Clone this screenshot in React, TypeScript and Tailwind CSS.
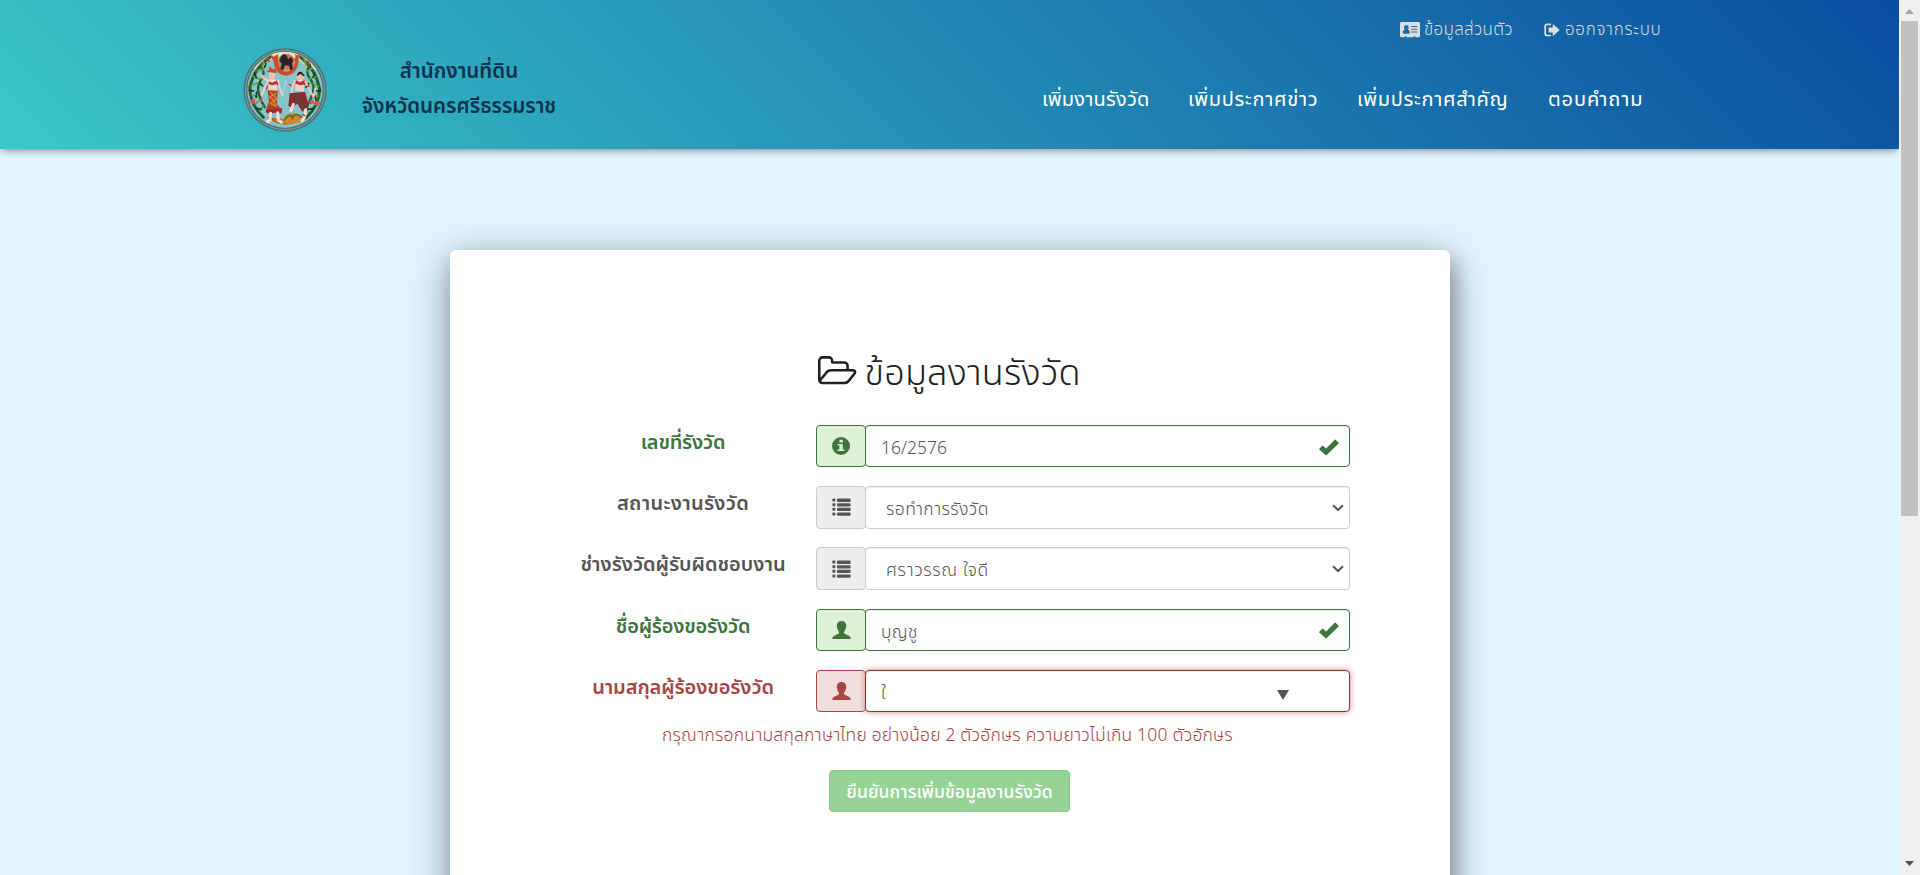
import React from "react";

type Tone = "success" | "neutral" | "error";

const labelTone: Record<Tone, string> = {
  success: "text-[#3c763d]",
  neutral: "text-[#555555]",
  error: "text-[#a94442]",
};

const addonTone: Record<Tone, string> = {
  success: "border-[#3c763d] bg-[#dff0d8] text-[#3c763d]",
  neutral: "border-[#cccccc] bg-[#eeeeee] text-[#555555]",
  error: "border-[#a94442] bg-[#f2dede] text-[#a94442]",
};

const fieldTone: Record<Tone, string> = {
  success: "border-[#3c763d] shadow-[inset_0_1px_1px_rgba(0,0,0,0.075)]",
  neutral: "border-[#cccccc] shadow-[inset_0_1px_1px_rgba(0,0,0,0.075)]",
  error: "border-[#843534] shadow-[inset_0_1px_1px_rgba(0,0,0,0.075),0_0_6px_#ce8483]",
};

function InfoIcon() {
  return (
    <svg className="size-[18px]" viewBox="0 0 18 18" fill="currentColor">
      <path fillRule="evenodd" d="M9 0a9 9 0 1 1 0 18A9 9 0 0 1 9 0ZM7.4 2.7v2.8h3.4V2.7ZM5.6 7v1.3h1.8v4.3H5.6V14h6.8v-1.4h-1.6V7Z" />
    </svg>
  );
}

function ListIcon() {
  return (
    <svg className="h-[18px] w-[19px]" viewBox="0 0 19 18" fill="currentColor">
      {[0.6, 5.2, 9.8, 14.4].map((y) => (
        <g key={y}>
          <rect x="0.4" y={y} width="3" height="3" rx="0.7" />
          <rect x="5" y={y} width="13.6" height="3.3" rx="1" />
        </g>
      ))}
    </svg>
  );
}

function UserIcon() {
  return (
    <svg className="h-[18px] w-[19px]" viewBox="0 0 19 18" fill="currentColor">
      <path d="M9.5 0C6.600 0 4.800 1.900 4.800 4.700c0 2.500 1 4.500 2 5.700.6.900.4 1.900-.5 2.400L1.800 15C.8 15.500.3 16.500.3 18h18.400c0-1.500-.5-2.500-1.500-3l-4.500-2.200c-.9-.5-1.100-1.500-.5-2.400 1-1.200 2-3.200 2-5.700C14.200 1.900 12.400 0 9.500 0Z" />
    </svg>
  );
}

function CheckIcon() {
  return (
    <svg className="mt-[2px] h-[17px] w-5 text-[#3c763d]" viewBox="0 0 20 17" fill="currentColor">
      <path d="M.3 9.800 3.300 6.700q.4-.4.800 0L7 9.500 15.800.700q.4-.4.800 0l3 3q.4.400 0 .8L7.500 16.200q-.4.400-.8 0L.3 10.500q-.4-.4 0-.7Z" />
    </svg>
  );
}

function ChevronIcon() {
  return (
    <svg className="mt-px h-[8px] w-[12px]" viewBox="0 0 12 8" fill="none" stroke="#555" strokeWidth="2">
      <path d="M1 1.200 6 6l5-4.800" />
    </svg>
  );
}

function FolderIcon() {
  return (
    <svg className="h-[31px] w-[38.57px]" viewBox="0 0 1920 1536" fill="currentColor">
      <path d="M1781 803q0-35-53-35h-1088q-40 0-85.500 21.500t-71.500 52.500l-294 363q-18 24-18 40 0 35 53 35h1088q40 0 86-22t71-53l294-363q18-22 18-39zM640 640h768v-160q0-40-28-68t-68-28h-576q-40 0-68-28t-28-68v-64q0-40-28-68t-68-28h-320q-40 0-68 28t-28 68v853l256-315q44-53 116-87.500t140-34.500zM1909 803q0 62-46 120l-295 363q-43 53-116 87.500t-140 34.500h-1088q-92 0-158-66t-66-158v-960q0-92 66-158t158-66h320q92 0 158 66t66 158v32h544q92 0 158 66t66 158v160h192q54 0 99 24.500t67 70.500q15 32 15 68z" />
    </svg>
  );
}

function CardIcon() {
  return (
    <svg className="h-4 w-5" viewBox="0 0 20 16" fill="currentColor">
      <path fillRule="evenodd" d="M1.500 0h17Q20 0 20 1.500v12.200q0 1.500-1.500 1.500h-3.200v-1h-1.600v1H6.300v-1H4.700v1H1.500Q0 15.200 0 13.700V1.500Q0 0 1.500 0ZM6.300 3C4.900 3 4 4 4 5.300c0 .9.300 1.700.8 2.200-1.200.3-2 1.500-2 3 0 .7.500 1.200 1.200 1.200h4.700c.7 0 1.200-.5 1.200-1.200 0-1.500-.8-2.700-2-3 .5-.5.800-1.300.8-2.200C8.700 4 7.700 3 6.300 3ZM11.300 4v1h6V4Zm0 2.800v1h6v-1Zm0 2.700v1h6v-1Z" />
    </svg>
  );
}

function LogoutIcon() {
  return (
    <svg className="h-[14px] w-4" viewBox="0 0 16 14">
      <path d="M7 1.300H3.200Q1.200 1.300 1.200 3.300v7.200q0 2 2 2H7" fill="none" stroke="currentColor" strokeWidth="1.700" />
      <path d="M8.800.9 15.700 7l-6.900 6.200V9.500H4.600v-5h4.200Z" fill="currentColor" />
    </svg>
  );
}

function Seal() {
  return (
    <svg className="size-[84px] shrink-0" viewBox="69 54 252 252">
      <circle cx="195" cy="180" r="125" fill="#4d7477" />
      <circle cx="195" cy="180" r="119" fill="none" stroke="#7fa3a2" strokeWidth="3" />
      <circle cx="195" cy="180" r="113" fill="#86c6cb" />
      <path d="M100 118Q145 62 195 66Q250 64 290 120L262 112Q230 75 195 78Q155 78 126 112Z" fill="#e6e3c8" />
      <g fill="none" stroke="#275b2b" strokeWidth="9" strokeLinecap="round">
        <path d="M150 82Q104 112 90 170Q88 220 130 262" />
        <path d="M242 82Q288 118 299 178Q298 226 258 264" />
        <path d="M122 108q16 20 2 40t-8 42 18 42" strokeWidth="7" />
        <path d="M270 104q-16 24 0 42t8 44-20 44" strokeWidth="7" />
      </g>
      <g fill="none" stroke="#69a043" strokeWidth="5" strokeLinecap="round">
        <path d="M130 94l-3 18M112 122l20-3M101 140l18 8M95 166l18-7M95 194l18 6M106 222l12-12M120 242l9-15" />
        <path d="M252 88l7 18M276 114l-14 10M287 140l-20 7M294 168l-15-8M296 198l-18 5M286 224l-11-13M264 246l-9-13" />
      </g>
      <g fill="none" stroke="#133c25" strokeWidth="5" strokeLinecap="round">
        <path d="M104 128l5 15M88 181l13 2M107 234l17 4M120 160l8 8M285 130l-6 12M302 182l-16 1M280 236l-18 2M266 160l-8 12M110 186l-2 16M284 196l4 14M138 100l-4 12" />
      </g>
      <path d="M153 76l12 16M238 74l-14 18M142 84l6 12M264 92l4 14" stroke="#cb4129" strokeWidth="6" />
      <path d="M161 80Q158 132 198 137Q237 132 236 80L226 72Q230 120 199 125Q170 120 174 72Z" fill="#d14b25" />
      <circle cx="199" cy="96" r="25" fill="#c9786a" />
      <path d="M178 92l6-14 7-6 10 5 3 11 8-8 8 9-4 12 3 16-8 4-4-14-12-1-5 14-9-3 4-16Z" fill="#302023" />
      <path d="M160 275Q196 294 238 274L254 263Q196 272 137 260Z" fill="#bb6c22" />
      <path d="M186 276q4-23 31-28 29 2 36 24-30 15-67 4Z" fill="#d38733" />
      <path d="M192 272q18-27 25-8 10-22 35 4" fill="none" stroke="#50702b" strokeWidth="5" />
      <path d="M147 146l24 3 1 33-27 2Z" fill="#f2d4cf" />
      <path d="M229 149l22 2 2 34-28-3Z" fill="#edd0c9" />
      <circle cx="156" cy="137" r="10" fill="#efc3ac" />
      <circle cx="241" cy="139" r="11" fill="#eac2a9" />
      <path d="M138 125l9-5 1-12 8 9 12 1 2 11Z" fill="#c84b2d" />
      <path d="M231 139q-1-15 13-14l11 12-5 2-8-8Z" fill="#241d22" />
      <path d="M140 151l17 7 18-9-1 12-18 5-15-6Z" fill="#bd302c" />
      <path d="M226 149l14 8 15-8 9 14-24 3-18-7Z" fill="#bd302c" />
      <g fill="none" stroke="#f1cbc5" strokeWidth="6" strokeLinecap="round" strokeLinejoin="round">
        <path d="M143 151l-15-9M129 142l-4-6M174 151l4 20 10 24M145 153l-20 42" />
        <path d="M225 152l-8 20-3 18M256 154l16 32 9 14 5-24" />
      </g>
      <circle cx="129" cy="141" r="6" fill="#eeb8ba" />
      <path d="M143 181l30 1-2 40 15 20-8 8-30-2-8-16 7-17Z" fill="#a64424" />
      <path d="M151 186l8 9-10 7 14 9-12 9 18 9M168 187l-6 11 8 8-8 10 7 12" stroke="#e38435" strokeWidth="4" fill="none" />
      <path d="M139 236q18 7 48-2l-3 17-19-5-12 7-16-6Z" fill="#a7242a" />
      <path d="M209 190l46-5 8 29 2 18-18 13-16-25-12 14-14-6Z" fill="#8d292d" />
      <path d="M211 193l17 4 2 22-13 8M235 189l-4 24 23 4M241 223l15 9" stroke="#5f4342" strokeWidth="6" fill="none" />
      <path d="M152 250l-2 21-8 4M173 248l2 23 9 6M220 223l-7 19M257 239l-3 22-8 11" stroke="#f4ded7" strokeWidth="9" strokeLinecap="round" fill="none" />
      <path d="M143 166l-4 13M171 158l3 8M215 168l-9-6M257 171l11-4M246 253l10 5" stroke="#bc2b2b" strokeWidth="4" />
      <path d="M198 151q-3 18-8 34" stroke="#b9d6d8" strokeWidth="3" fill="none" />
      <g fill="#e64b66">
        <circle cx="98" cy="214" r="8" /><circle cx="124" cy="212" r="5" /><circle cx="275" cy="216" r="7" /><circle cx="293" cy="220" r="7" />
      </g>
    </svg>
  );
}

interface FieldProps {
  label: string;
  labelClass: string;
  tone: Tone;
  icon: React.ReactNode;
  value: string;
  valueClass: string;
  end?: React.ReactNode;
}

function Field({ label, labelClass, tone, icon, value, valueClass, end }: FieldProps) {
  return (
    <div className="mb-[18.8px] flex h-[42.4px]">
      <div className={`flex h-9 w-[266px] items-center justify-center whitespace-nowrap text-[20px] font-semibold ${labelTone[tone]} ${labelClass}`}>{label}</div>
      <div className={`flex w-[50px] items-center justify-center rounded-[4px] border ${addonTone[tone]}`}>{icon}</div>
      <div className={`-ml-px flex w-[485px] items-center justify-between rounded-[4px] border bg-white text-[17.5px] font-[350] text-[#555555] ${fieldTone[tone]}`}>
        <span className={`whitespace-nowrap pt-[6px] ${valueClass}`}>{value}</span>
        {end}
      </div>
    </div>
  );
}

const nav = [
  { text: "เพิ่มงานรังวัด", cls: "w-[109px] mr-[37px] tracking-[0.2px]" },
  { text: "เพิ่มประกาศข่าว", cls: "w-[133px] mr-[36px] tracking-[0.7px]" },
  { text: "เพิ่มประกาศสำคัญ", cls: "w-[154px] mr-[37px] tracking-[0.7px]" },
  { text: "ตอบคำถาม", cls: "w-[94px] tracking-[0.9px]" },
];

export default function App() {
  return (
    <div className="flex h-[875px] w-[1920px] overflow-hidden bg-[#e2f4ff] font-['Noto_Sans_Thai','Noto_Sans','Open_Sans',sans-serif]">
      <div className="flex w-[1899px] flex-col overflow-hidden">
        <header className="z-10 flex h-[149px] shrink-0 justify-between bg-[linear-gradient(45deg,#3bc8c8,#0a4da0)] pl-[243px] shadow-[0_4px_7px_-2px_rgba(0,0,0,0.4)]">
          <div className="flex pt-12">
            <Seal />
            <div className="ml-[33px] mt-[6px] flex w-[198px] flex-col items-center whitespace-nowrap text-[20.5px] font-semibold leading-[35px] text-[#10324f]">
              <span>สำนักงานที่ดิน</span>
              <span>จังหวัดนครศรีธรรมราช</span>
            </div>
          </div>
          <div className="flex w-[857px] flex-col">
            <div className="ml-[358px] flex h-[60px] items-center whitespace-nowrap text-[17px] font-[350] text-[#dddddd]">
              <CardIcon />
              <span className="ml-1 w-[88px] pt-[2px] tracking-[0.3px]">ข้อมูลส่วนตัว</span>
              <span className="ml-[32px]"><LogoutIcon /></span>
              <span className="ml-[5px] pt-[2px] tracking-[0.7px]">ออกจากระบบ</span>
            </div>
            <nav className="flex h-[80px] items-center whitespace-nowrap text-[20px] text-white">
              {nav.map((n) => (
                <span key={n.text} className={n.cls}>{n.text}</span>
              ))}
            </nav>
          </div>
        </header>
        <main className="ml-[450px] mt-[101px] h-[700px] w-[1000px] shrink-0 rounded-[6px] bg-white pl-[100px] shadow-[5px_10px_20px_rgba(0,0,0,0.22),0_10px_40px_rgba(0,0,0,0.38)]">
          <h1 className="flex h-[175px] items-start pl-[268px] pt-[106px] text-[36px] font-light leading-[36px] text-[#212121]">
            <FolderIcon />
            <span className="ml-2 whitespace-nowrap tracking-[0.2px]">ข้อมูลงานรังวัด</span>
          </h1>
          <Field label="เลขที่รังวัด" labelClass="tracking-[-0.2px]" tone="success" icon={<InfoIcon />} value="16/2576" valueClass="pl-[15px]" end={<span className="mr-[10px]"><CheckIcon /></span>} />
          <Field label="สถานะงานรังวัด" labelClass="tracking-[0.3px]" tone="neutral" icon={<ListIcon />} value="รอทำการรังวัด" valueClass="pl-5 tracking-[0.4px]" end={<span className="mr-[5px]"><ChevronIcon /></span>} />
          <Field label="ช่างรังวัดผู้รับผิดชอบงาน" labelClass="" tone="neutral" icon={<ListIcon />} value="ศราวรรณ ใจดี" valueClass="pl-5 tracking-[0.6px]" end={<span className="mr-[5px]"><ChevronIcon /></span>} />
          <Field label="ชื่อผู้ร้องขอรังวัด" labelClass="tracking-[-0.2px]" tone="success" icon={<UserIcon />} value="บุญชู" valueClass="pl-[15px] tracking-[0.4px]" end={<span className="mr-[10px]"><CheckIcon /></span>} />
          <Field
            label="นามสกุลผู้ร้องขอรังวัด"
            labelClass="tracking-[-0.1px]"
            tone="error"
            icon={<UserIcon />}
            value="ใ"
            valueClass="pl-[15px]"
            end={<svg className="mr-[60px] mt-2 h-[10px] w-3" viewBox="0 0 12 10" fill="#555"><path d="M0 0h12L6 10Z" /></svg>}
          />
          <p className="-mt-[9px] ml-[112px] h-7 w-[575px] whitespace-nowrap text-[17.5px] font-[350] leading-7 tracking-[0.2px] text-[#a94442]">กรุณากรอกนามสกุลภาษาไทย อย่างน้อย 2 ตัวอักษร ความยาวไม่เกิน 100 ตัวอักษร</p>
          <button className="ml-[279px] mt-[20px] flex h-[42px] w-[241px] items-center justify-center whitespace-nowrap rounded-[4px] border border-[#8fca8f] bg-[#97d297] pt-1 text-[17.5px] font-medium tracking-[0.1px] text-white">ยืนยันการเพิ่มข้อมูลงานรังวัด</button>
        </main>
      </div>
      <aside className="flex w-[21px] flex-col items-center justify-between bg-[#f0f0f0] pb-[9px] pt-[9px]">
        <div className="flex flex-col items-center">
          <svg className="h-[5px] w-[9px]" viewBox="0 0 9 5" fill="#a3a3a3"><path d="M0 5 4.500 0 9 5Z" /></svg>
          <div className="mt-[7px] h-[495px] w-[17px] bg-[#c1c1c1]" />
        </div>
        <svg className="h-[5px] w-[9px]" viewBox="0 0 9 5" fill="#505050"><path d="M0 0h9L4.500 5Z" /></svg>
      </aside>
    </div>
  );
}
